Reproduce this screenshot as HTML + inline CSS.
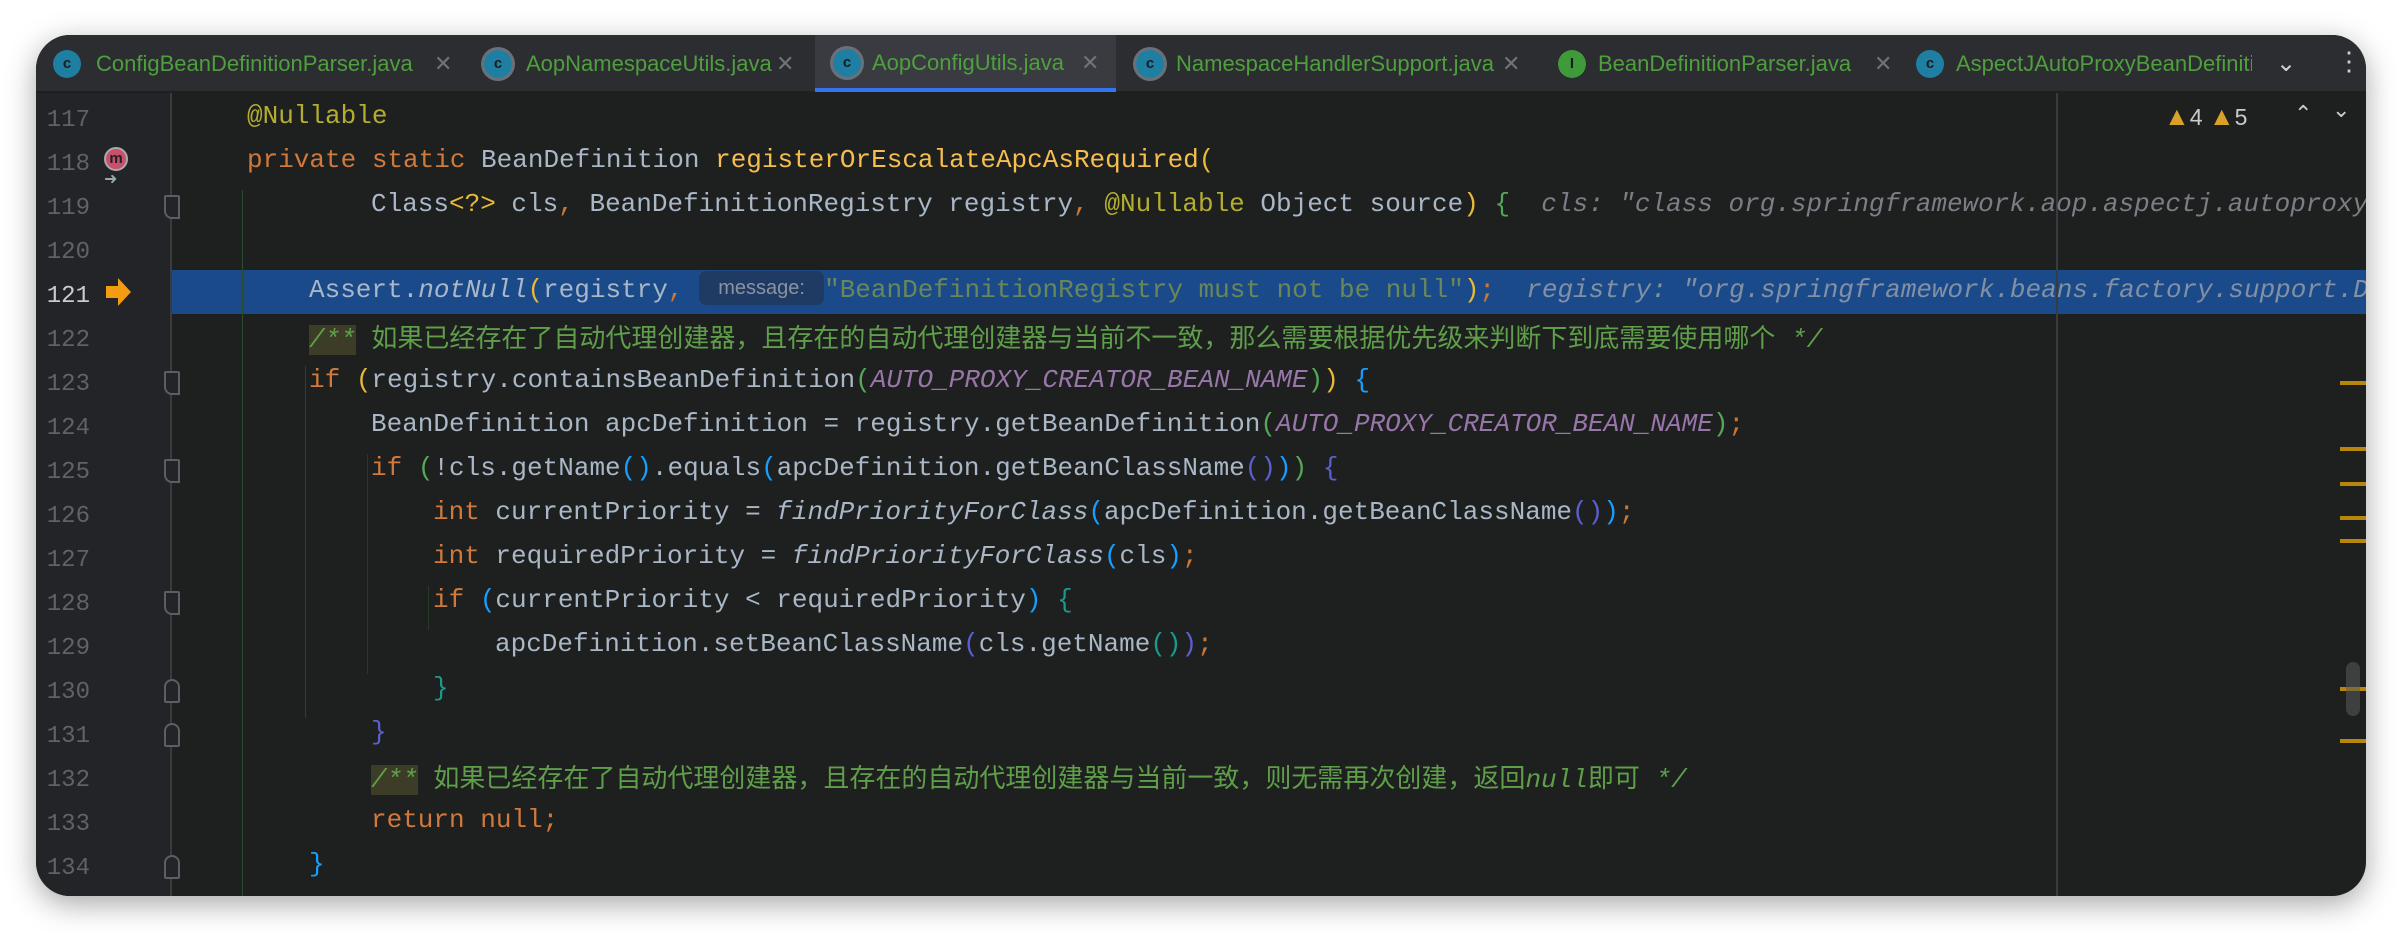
<!DOCTYPE html>
<html><head><meta charset="utf-8"><style>
*{margin:0;padding:0;box-sizing:border-box}
body{width:2402px;height:932px;background:#fff;position:relative;overflow:hidden}
.win{position:absolute;left:36px;top:35px;width:2330px;height:861px;background:#1e1f1f;border-radius:34px;overflow:hidden;box-shadow:0 8px 30px rgba(0,0,0,.35)}
.tabs{position:absolute;left:0;top:0;width:100%;height:57px;background:#2b2d30;border-bottom:1px solid #1e1f22}
.tab{position:absolute;top:0;height:57px;font:22px "Liberation Sans",sans-serif;color:#4f9f3f;line-height:57px;white-space:nowrap}
.tab .ic{position:absolute;top:15px;width:28px;height:28px;border-radius:50%;background:#1f7fa3;color:#1b1c1f;font:bold 15px "Liberation Sans",sans-serif;line-height:28px;text-align:center}
.tab .x{position:absolute;top:0;color:#6f737a;font-size:22px}
.gut{position:absolute;left:0;top:58px;width:136px;height:810px;background:#232427;border-right:2px solid #393b3e}
.ln{position:absolute;left:0;width:54px;text-align:right;font:24px "Liberation Mono",monospace;color:#5f6266;height:44px;line-height:44px;margin-top:5px}
.code{position:absolute;left:0;height:44px;line-height:44px;font:26px "Liberation Mono","Noto Sans CJK SC",monospace;color:#a9b7c6;white-space:pre;margin-top:7px}
.k{color:#cf7a3c}.a{color:#b3ae30}.f{color:#f5be4f}.c{color:#5f9f4a}.s{color:#6a8759}.i{font-style:italic}.p{color:#9876aa;font-style:italic}
.h{color:#7b7f85;font-style:italic}
.cj{font-family:"Noto Sans CJK SC","WenQuanYi Zen Hei",sans-serif;letter-spacing:0;font-size:26px}
.y{color:#e8ba36}.g{color:#54a857}.b{color:#179fff}.v{color:#5b5fd0}.t{color:#1a9a8a}.o{color:#cc7832}
.fold{position:absolute;left:128px;width:16px;height:24px;border:2px solid #5b5e63;background:#232427}
.ig{position:absolute;width:1px;background:#2f3a4a}
.mk{position:absolute;left:2304px;width:26px;height:4px;background:#b8860b}
</style></head><body>
<div class="win">
<div class="tabs">
 <div class="tab" style="left:0;width:280px"><span class="ic" style="left:17px">c</span><span style="position:absolute;left:60px">ConfigBeanDefinitionParser.java</span><span class="x" style="left:398px">✕</span></div>
 <div class="tab" style="left:440px"><span class="ic" style="left:8px;box-shadow:0 0 0 3px #6b7078">c</span><span style="position:absolute;left:50px">AopNamespaceUtils.java</span><span class="x" style="left:300px">✕</span></div>
 <div class="tab" style="left:779px;width:301px;background:#393b40;border-bottom:4px solid #3574f0;line-height:55px"><span class="ic" style="left:18px;top:14px;box-shadow:0 0 0 3px #6b7078">c</span><span style="position:absolute;left:57px">AopConfigUtils.java</span><span class="x" style="left:266px">✕</span></div>
 <div class="tab" style="left:1090px"><span class="ic" style="left:10px;box-shadow:0 0 0 3px #6b7078">c</span><span style="position:absolute;left:50px">NamespaceHandlerSupport.java</span><span class="x" style="left:376px">✕</span></div>
 <div class="tab" style="left:1512px"><span class="ic" style="left:10px;background:#3f9b3a">I</span><span style="position:absolute;left:50px">BeanDefinitionParser.java</span><span class="x" style="left:326px">✕</span></div>
 <div class="tab" style="left:1870px"><span class="ic" style="left:10px">c</span><span style="position:absolute;left:50px;width:296px;overflow:hidden;display:block">AspectJAutoProxyBeanDefinitionParser.java</span></div>
 <div class="tab" style="left:2240px;color:#ced0d6;font-size:24px">⌄</div>
 <div class="tab" style="left:2300px;color:#ced0d6;font-size:26px;line-height:52px">⋮</div>
</div>
<div class="gut"></div>
<div style="position:absolute;left:136px;top:235px;width:2194px;height:44px;background:#1b4a8b"></div>
<div style="position:absolute;left:2020px;top:58px;width:2px;height:810px;background:#393b3e"></div>
<div style="position:absolute;left:206px;top:155px;width:1px;height:710px;background:#2c4a2c"></div>
<div class="ig" style="left:269px;top:331px;height:352px"></div>
<div class="ig" style="left:331px;top:419px;height:220px;background:#2f2f4a"></div>
<div class="ig" style="left:392px;top:551px;height:44px;background:#2a3a2a"></div>
<!-- line numbers -->
<div class="ln" style="top:59px">117</div><div class="ln" style="top:103px">118</div><div class="ln" style="top:147px">119</div><div class="ln" style="top:191px">120</div><div class="ln" style="top:235px;color:#c9cbcf">121</div><div class="ln" style="top:279px">122</div><div class="ln" style="top:323px">123</div><div class="ln" style="top:367px">124</div><div class="ln" style="top:411px">125</div><div class="ln" style="top:455px">126</div><div class="ln" style="top:499px">127</div><div class="ln" style="top:543px">128</div><div class="ln" style="top:587px">129</div><div class="ln" style="top:631px">130</div><div class="ln" style="top:675px">131</div><div class="ln" style="top:719px">132</div><div class="ln" style="top:763px">133</div><div class="ln" style="top:807px">134</div>
<!-- gutter icons -->
<div style="position:absolute;left:68px;top:112px;width:24px;height:24px;border-radius:50%;background:#c94f6d;border:2px solid #aaa;color:#222;font:bold 15px 'Liberation Sans',sans-serif;text-align:center;line-height:20px">m</div>
<div style="position:absolute;left:68px;top:134px;color:#9aa;font-size:16px">➜</div>
<svg style="position:absolute;left:70px;top:243px" width="26" height="28"><path d="M0 8h12V0l13 14-13 14v-8H0z" fill="#f39c12"/></svg>
<div class="fold" style="top:160px;border-radius:2px 2px 0 8px"></div>
<div class="fold" style="top:336px;border-radius:2px 2px 0 8px"></div>
<div class="fold" style="top:424px;border-radius:2px 2px 0 8px"></div>
<div class="fold" style="top:556px;border-radius:2px 2px 0 8px"></div>
<div class="fold" style="top:644px;border-radius:8px 8px 2px 2px"></div>
<div class="fold" style="top:688px;border-radius:8px 8px 2px 2px"></div>
<div class="fold" style="top:820px;border-radius:8px 8px 2px 2px"></div>
<!-- code -->
<div class="code a" style="left:211px;top:59px">@Nullable</div>
<div class="code" style="left:211px;top:103px"><span class="k">private static </span>BeanDefinition <span class="f">registerOrEscalateApcAsRequired</span><span class="y">(</span></div>
<div class="code" style="left:335px;top:147px">Class<span class="y">&lt;?&gt;</span> cls<span class="o">,</span> BeanDefinitionRegistry registry<span class="o">,</span> <span class="a">@Nullable</span> Object source<span class="y">)</span> <span class="g">{</span>  <span class="h">cls: "class org.springframework.aop.aspectj.autoproxy.AspectJAwareAdvisorAutoProxyCreator"</span></div>
<div class="code" style="left:273px;top:235px;margin-top:5px">Assert.<span class="i">notNull</span><span class="y">(</span>registry<span class="o">,</span> <span style="display:inline-block;width:125px;height:34px;vertical-align:middle;background:#1f3b63;border-radius:7px;font:20px 'Liberation Sans',sans-serif;color:#8a93a3;line-height:34px;text-align:center;margin-top:-4px">message:</span><span class="s">"BeanDefinitionRegistry must not be null"</span><span class="y">)</span><span class="o">;</span>  <span class="h" style="color:#8390a3">registry: "org.springframework.beans.factory.support.DefaultListableBeanFactory"</span></div>
<div class="code c" style="left:273px;top:279px;margin-top:4px"><span style="background:#3d3c26;font-style:italic">/**</span> <span class="cj">如果已经存在了自动代理创建器，且存在的自动代理创建器与当前不一致，那么需要根据优先级来判断下到底需要使用哪个</span> <span class="i">*/</span></div>
<div class="code" style="left:273px;top:323px"><span class="k">if </span><span class="y">(</span>registry.containsBeanDefinition<span class="g">(</span><span class="p">AUTO_PROXY_CREATOR_BEAN_NAME</span><span class="g">)</span><span class="y">)</span> <span class="b">{</span></div>
<div class="code" style="left:335px;top:367px">BeanDefinition apcDefinition = registry.getBeanDefinition<span class="g">(</span><span class="p">AUTO_PROXY_CREATOR_BEAN_NAME</span><span class="g">)</span><span class="o">;</span></div>
<div class="code" style="left:335px;top:411px"><span class="k">if </span><span class="g">(</span>!cls.getName<span class="b">()</span>.equals<span class="b">(</span>apcDefinition.getBeanClassName<span class="v">()</span><span class="b">)</span><span class="g">)</span> <span class="v">{</span></div>
<div class="code" style="left:397px;top:455px"><span class="k">int </span>currentPriority = <span class="i">findPriorityForClass</span><span class="b">(</span>apcDefinition.getBeanClassName<span class="v">()</span><span class="b">)</span><span class="o">;</span></div>
<div class="code" style="left:397px;top:499px"><span class="k">int </span>requiredPriority = <span class="i">findPriorityForClass</span><span class="b">(</span>cls<span class="b">)</span><span class="o">;</span></div>
<div class="code" style="left:397px;top:543px"><span class="k">if </span><span class="b">(</span>currentPriority &lt; requiredPriority<span class="b">)</span> <span class="t">{</span></div>
<div class="code" style="left:459px;top:587px">apcDefinition.setBeanClassName<span class="v">(</span>cls.getName<span class="t">()</span><span class="v">)</span><span class="o">;</span></div>
<div class="code t" style="left:397px;top:631px">}</div>
<div class="code v" style="left:335px;top:675px">}</div>
<div class="code c" style="left:335px;top:719px;margin-top:4px"><span style="background:#3d3c26;font-style:italic">/**</span> <span class="cj">如果已经存在了自动代理创建器，且存在的自动代理创建器与当前一致，则无需再次创建，返回</span><span class="i">null</span><span class="cj">即可</span> <span class="i">*/</span></div>
<div class="code" style="left:335px;top:763px"><span class="k">return null;</span></div>
<div class="code b" style="left:273px;top:807px">}</div>
<!-- right status -->
<div style="position:absolute;left:2128px;top:66px;font:23px 'Liberation Sans',sans-serif;color:#c9cbcf;white-space:pre"><span style="color:#d9a12a;font-size:26px">▲</span>4 <span style="color:#d9a12a;font-size:26px">▲</span>5</div>
<div style="position:absolute;left:2258px;top:66px;font:22px 'Liberation Sans',sans-serif;color:#c9cbcf">⌃</div>
<div style="position:absolute;left:2296px;top:62px;font:22px 'Liberation Sans',sans-serif;color:#c9cbcf">⌄</div>
<!-- scrollbar marks -->
<div class="mk" style="top:346px"></div><div class="mk" style="top:412px"></div><div class="mk" style="top:447px"></div><div class="mk" style="top:481px"></div><div class="mk" style="top:504px"></div><div class="mk" style="top:652px"></div><div class="mk" style="top:704px"></div>
<div style="position:absolute;left:2310px;top:627px;width:14px;height:54px;border-radius:7px;background:rgba(90,90,90,.55)"></div>
</div>
</body></html>
